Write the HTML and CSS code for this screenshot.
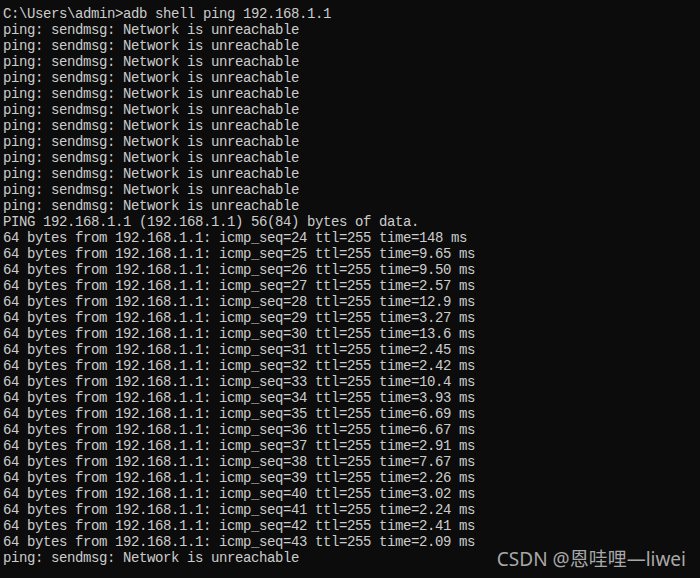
FILE: index.html
```html
<!DOCTYPE html>
<html>
<head>
<meta charset="utf-8">
<link rel="stylesheet" href="styles.css">
</head>
<body>
<div class="console">
<pre class="out">C:\Users\admin&gt;adb shell ping 192.168.1.1
ping: sendmsg: Network is unreachable
ping: sendmsg: Network is unreachable
ping: sendmsg: Network is unreachable
ping: sendmsg: Network is unreachable
ping: sendmsg: Network is unreachable
ping: sendmsg: Network is unreachable
ping: sendmsg: Network is unreachable
ping: sendmsg: Network is unreachable
ping: sendmsg: Network is unreachable
ping: sendmsg: Network is unreachable
ping: sendmsg: Network is unreachable
ping: sendmsg: Network is unreachable
PING 192.168.1.1 (192.168.1.1) 56(84) bytes of data.
64 bytes from 192.168.1.1: icmp_seq=24 ttl=255 time=148 ms
64 bytes from 192.168.1.1: icmp_seq=25 ttl=255 time=9.65 ms
64 bytes from 192.168.1.1: icmp_seq=26 ttl=255 time=9.50 ms
64 bytes from 192.168.1.1: icmp_seq=27 ttl=255 time=2.57 ms
64 bytes from 192.168.1.1: icmp_seq=28 ttl=255 time=12.9 ms
64 bytes from 192.168.1.1: icmp_seq=29 ttl=255 time=3.27 ms
64 bytes from 192.168.1.1: icmp_seq=30 ttl=255 time=13.6 ms
64 bytes from 192.168.1.1: icmp_seq=31 ttl=255 time=2.45 ms
64 bytes from 192.168.1.1: icmp_seq=32 ttl=255 time=2.42 ms
64 bytes from 192.168.1.1: icmp_seq=33 ttl=255 time=10.4 ms
64 bytes from 192.168.1.1: icmp_seq=34 ttl=255 time=3.93 ms
64 bytes from 192.168.1.1: icmp_seq=35 ttl=255 time=6.69 ms
64 bytes from 192.168.1.1: icmp_seq=36 ttl=255 time=6.67 ms
64 bytes from 192.168.1.1: icmp_seq=37 ttl=255 time=2.91 ms
64 bytes from 192.168.1.1: icmp_seq=38 ttl=255 time=7.67 ms
64 bytes from 192.168.1.1: icmp_seq=39 ttl=255 time=2.26 ms
64 bytes from 192.168.1.1: icmp_seq=40 ttl=255 time=3.02 ms
64 bytes from 192.168.1.1: icmp_seq=41 ttl=255 time=2.24 ms
64 bytes from 192.168.1.1: icmp_seq=42 ttl=255 time=2.41 ms
64 bytes from 192.168.1.1: icmp_seq=43 ttl=255 time=2.09 ms
ping: sendmsg: Network is unreachable</pre>
<div class="watermark">CSDN @恩哇哩—liwei</div>
</div>
</body>
</html>
```
FILE: styles.css
```css
html, body {
  margin: 0;
  padding: 0;
  background: #0c0c0c;
}
.console {
  position: relative;
  width: 700px;
  height: 578px;
  overflow: hidden;
  background: #0c0c0c;
}
.out {
  margin: 0;
  padding: 6px 0 0 3px;
  font-family: "Liberation Mono", monospace;
  font-size: 14px;
  letter-spacing: -0.4px;
  line-height: 16px;
  color: #cccccc;
  white-space: pre;
}
.watermark {
  position: absolute;
  right: 14px;
  bottom: 8px;
  font-family: "Noto Sans", "Noto Sans CJK SC", sans-serif;
  font-size: 19px;
  line-height: 22px;
  color: #a8a8a8;
}
```
